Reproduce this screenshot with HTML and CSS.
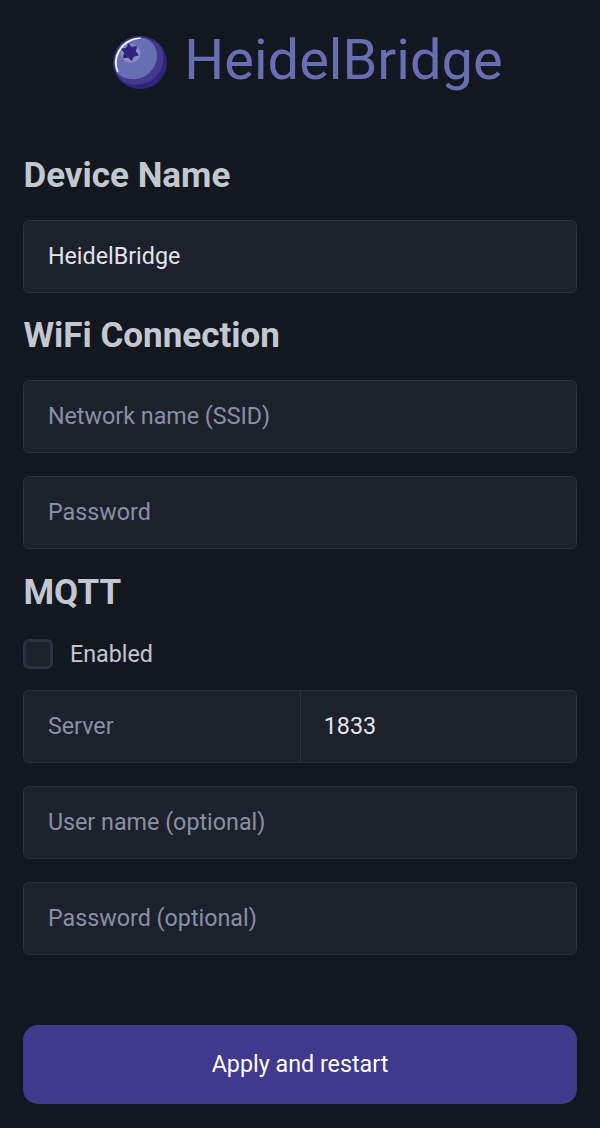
FILE: index.html
```
<!DOCTYPE html>
<html lang="en">
<head>
<meta charset="utf-8">
<title>HeidelBridge</title>
<link rel="stylesheet" href="styles.css">
</head>
<body>
<header class="brand">
<svg class="logo" viewBox="0 0 54 54" preserveAspectRatio="none" aria-hidden="true">
<defs><clipPath id="berry"><circle cx="27" cy="27" r="26.9"/></clipPath></defs>
<g clip-path="url(#berry)">
<rect width="54" height="54" fill="#2f237d"/>
<circle cx="23" cy="22.5" r="27.5" fill="#41398d"/>
<path d="M1 27C1 11 12 1 26 1C38 2 44 11 44 20C44 33 33 44 20 44C8 44 1 37 1 27Z" fill="#686eb2"/>
<path d="M4.6 36C-1 22 8 4 27 2" fill="none" stroke="#f2f2fa" stroke-width="1.8" stroke-linecap="round"/>
</g>
<circle cx="27" cy="27" r="26.2" fill="none" stroke="#2f237d" stroke-width="1"/>
<circle cx="17.6" cy="17.6" r="9.7" fill="#8b8dc3"/>
<path d="M15.4 7.8L18.7 11.4L23.6 10.8L22.4 15.6L25.4 19.5L20.6 20.6L18.6 25L15.3 21.6L10.2 22.2L11.6 17.4L8.6 13.3L13.4 12.4Z" fill="#2f237d" stroke="#2f237d" stroke-width=".9"/>
</svg>
<h1 class="brand-name">HeidelBridge</h1>
</header>
<form class="settings">
<h3 class="section-title">Device Name</h3>
<input class="field" type="text" value="HeidelBridge">
<h3 class="section-title">WiFi Connection</h3>
<input class="field" type="text" placeholder="Network name (SSID)">
<input class="field" type="text" placeholder="Password">
<h3 class="section-title">MQTT</h3>
<label class="toggle"><input class="checkbox" type="checkbox">Enabled</label>
<div class="group">
<input class="field" type="text" placeholder="Server">
<input class="field" type="text" value="1833">
</div>
<input class="field" type="text" placeholder="User name (optional)">
<input class="field" type="text" placeholder="Password (optional)">
<button class="submit" type="button">Apply and restart</button>
</form>
</body>
</html>
```
FILE: styles.css
```
* { box-sizing: border-box; }
body {
  margin: 0;
  padding: 36px 23.4px 0;
  min-height: 1128px;
  background: #13171f;
  color: #c2c7d0;
  font: 23.3px/35px Roboto, sans-serif;
}
.brand {
  display: flex;
  align-items: center;
  justify-content: center;
  gap: 17px;
  height: 54px;
  padding-left: 16px;
}
.logo { width: 54px; height: 53px; flex: none; margin-bottom: 1.5px; }
.brand-name {
  margin: 0;
  padding-bottom: 6px;
  color: #686eb2;
  font-size: 56px;
  font-weight: 400;
  line-height: 54px;
}
.settings { display: flex; flex-direction: column; margin-top: 66px; }
.section-title {
  margin: 0 0 23.9px;
  font-size: 35px;
  font-weight: 700;
  line-height: 40px;
}
.field {
  display: block;
  width: 100%;
  height: 73px;
  margin: 0 0 23.3px;
  padding: 0 23.5px 1px;
  border: 1.5px solid #2a3140;
  border-radius: 6px;
  background: #1c212c;
  color: #e0e3e7;
  font: inherit;
  outline: none;
}
.field::placeholder { color: #8891a4; opacity: 1; }
.toggle { display: flex; align-items: center; gap: 16.5px; height: 35px; margin: 0 0 18px; }
.checkbox {
  appearance: none;
  width: 30px;
  height: 30px;
  margin: 0;
  border: 3px solid #2a3140;
  border-radius: 6px;
  background: #1c212c;
}
.group { display: flex; }
.group .field { flex: 1; min-width: 0; }
.group .field:first-child { border-right: 0; border-radius: 6px 0 0 6px; }
.group .field:last-child { padding-left: 23px; border-left-width: 1.5px; border-radius: 0 6px 6px 0; }
.submit {
  width: 100%;
  height: 79px;
  margin-top: 46.4px;
  border: 0;
  border-radius: 15px;
  background: #40398d;
  color: #fff;
  font: inherit;
}
```
